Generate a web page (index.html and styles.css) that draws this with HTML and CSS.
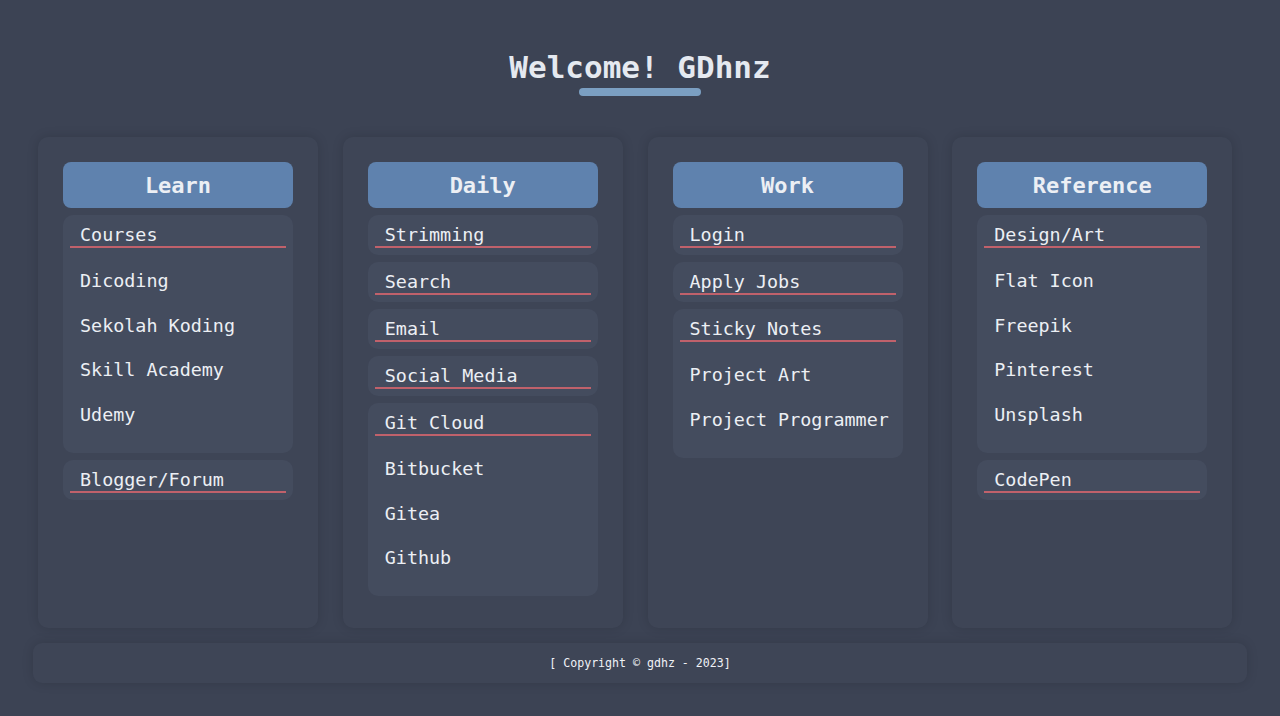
FILE: index.html
```html
<!DOCTYPE html>
<html lang="en">
<head>
<meta charset="utf-8">
<title>Welcome! GDhnz</title>
<link rel="stylesheet" href="styles.css">
</head>
<body>
<header class="top">
  <h1 class="title">Welcome! GDhnz</h1>
  <div class="title-bar"></div>
</header>
<main class="cards">
  <section class="card">
    <h2 class="card-head">Learn</h2>
    <div class="group">
      <div class="group-title">Courses</div>
      <ul class="items">
        <li>Dicoding</li>
        <li>Sekolah Koding</li>
        <li>Skill Academy</li>
        <li>Udemy</li>
      </ul>
    </div>
    <div class="group"><div class="group-title">Blogger/Forum</div></div>
  </section>
  <section class="card">
    <h2 class="card-head">Daily</h2>
    <div class="group"><div class="group-title">Strimming</div></div>
    <div class="group"><div class="group-title">Search</div></div>
    <div class="group"><div class="group-title">Email</div></div>
    <div class="group"><div class="group-title">Social Media</div></div>
    <div class="group">
      <div class="group-title">Git Cloud</div>
      <ul class="items">
        <li>Bitbucket</li>
        <li>Gitea</li>
        <li>Github</li>
      </ul>
    </div>
  </section>
  <section class="card">
    <h2 class="card-head">Work</h2>
    <div class="group"><div class="group-title">Login</div></div>
    <div class="group"><div class="group-title">Apply Jobs</div></div>
    <div class="group">
      <div class="group-title">Sticky Notes</div>
      <ul class="items">
        <li>Project Art</li>
        <li>Project Programmer</li>
      </ul>
    </div>
  </section>
  <section class="card">
    <h2 class="card-head">Reference</h2>
    <div class="group">
      <div class="group-title">Design/Art</div>
      <ul class="items">
        <li>Flat Icon</li>
        <li>Freepik</li>
        <li>Pinterest</li>
        <li>Unsplash</li>
      </ul>
    </div>
    <div class="group"><div class="group-title">CodePen</div></div>
  </section>
</main>
<footer class="footer">[ Copyright © gdhz - 2023]</footer>
</body>
</html>
```
FILE: styles.css
```css
* { box-sizing: border-box; }
html, body { margin: 0; padding: 0; }
body {
  background: #3c4354;
  color: #eceff4;
  font-family: "DejaVu Sans Mono", "Liberation Mono", monospace;
  width: 1280px;
  height: 716px;
  overflow: hidden;
}
.top {
  padding-top: 49px;
  display: flex;
  flex-direction: column;
  align-items: center;
}
.title {
  margin: 0;
  font-size: 31px;
  line-height: 36px;
  font-weight: bold;
  color: #e5e9f0;
}
.title-bar {
  width: 122px;
  height: 8px;
  margin-top: 3px;
  border-radius: 4px;
  background: #7b9fc2;
}
.cards {
  display: flex;
  gap: 24.75px;
  margin: 41px 0 0 38px;
}
.card {
  width: 280px;
  height: 491px;
  padding: 25px 25px 0;
  background: #3e4556;
  border-radius: 10px;
  box-shadow: 0 0 12px rgba(0, 0, 0, 0.14);
}
.card-head {
  margin: 0;
  height: 46px;
  line-height: 47px;
  text-align: center;
  font-size: 22px;
  font-weight: bold;
  background: #5f82ae;
  color: #eceff4;
  border-radius: 8px;
}
.group {
  margin-top: 7px;
  padding: 0 7px 7px;
  background: #444c5e;
  border-radius: 10px;
}
.group-title {
  padding: 8px 0 0 10px;
  font-size: 18.4px;
  line-height: 23px;
  border-bottom: 2px solid #c0616b;
}
.items {
  list-style: none;
  margin: 0;
  padding: 11px 0 8.5px;
}
.items li {
  padding-left: 10px;
  font-size: 18.4px;
  line-height: 44.5px;
}
.footer {
  margin: 15px 33px 0;
  height: 40px;
  line-height: 40px;
  text-align: center;
  font-size: 11.6px;
  background: #3e4556;
  border-radius: 9px;
  box-shadow: 0 0 12px rgba(0, 0, 0, 0.14);
  color: #f0f2f6;
}
```
